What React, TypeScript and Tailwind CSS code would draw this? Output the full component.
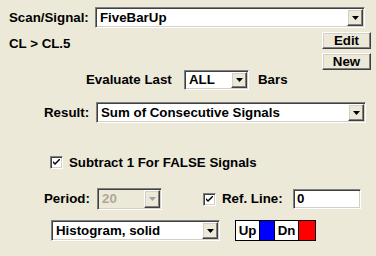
import React from "react";

const sunken =
  "border border-t-[#808080] border-l-[#808080] border-b-white border-r-white shadow-[inset_1px_1px_0_#404040,inset_-1px_-1px_0_#d4d0c8]";
const raised =
  "border border-t-white border-l-white border-b-[#404040] border-r-[#404040] shadow-[inset_-1px_-1px_0_#808080,inset_1px_1px_0_#d4d0c8]";

function Arrow({ disabled }: { disabled?: boolean }) {
  return (
    <svg width="7" height="4" viewBox="0 0 7 4">
      <path d="M0 0H7L3.5 4Z" fill={disabled ? "#a0a0a0" : "#000"} />
    </svg>
  );
}

function Combo({
  value,
  className,
  disabled,
}: {
  value: string;
  className: string;
  disabled?: boolean;
}) {
  return (
    <div
      className={`${sunken} ${className} flex items-stretch p-[1px] ${
        disabled ? "bg-[#ece9d8]" : "bg-white"
      }`}
    >
      <div
        className={`flex-1 flex items-center pl-[3px] ${
          disabled ? "text-[#aca899]" : "text-black"
        }`}
      >
        {value}
      </div>
      <div
        className={`${raised} w-[16px] flex items-center justify-center bg-[#ece9d8]`}
      >
        <Arrow disabled={disabled} />
      </div>
    </div>
  );
}

function Check() {
  return (
    <div
      className={`${sunken} w-[13px] h-[13px] bg-white flex items-center justify-center`}
    >
      <svg width="7" height="7" viewBox="0 0 7 7">
        <path d="M0 2L0 4L2 6L7 1L7 -1L2 4Z" fill="#000" />
      </svg>
    </div>
  );
}

export default function App() {
  return (
    <div className="w-[376px] h-[256px] bg-[#ece9d8] font-['Liberation_Sans',Arial,sans-serif] font-bold text-[13.3px] leading-none text-black overflow-hidden">
      {/* Row 1 */}
      <div className="flex items-center h-[21px] mt-[7px] pl-[9px]">
        <span className="w-[86px]">Scan/Signal:</span>
        <Combo value="FiveBarUp" className="w-[270px] h-[21px]" />
      </div>
      {/* Row 2 */}
      <div className="flex h-[42px]">
        <div className="pl-[9px] pt-[9px] flex-1">CL &gt; CL.5</div>
        <div className="flex flex-col gap-[4px] pt-[4px] mr-[5px]">
          <div
            className={`${raised} w-[49px] h-[17px] flex items-center justify-center bg-[#ece9d8]`}
          >
            Edit
          </div>
          <div
            className={`${raised} w-[49px] h-[17px] flex items-center justify-center bg-[#ece9d8]`}
          >
            New
          </div>
        </div>
      </div>
      {/* Row 3 */}
      <div className="flex items-center h-[20px] pl-[86px]">
        <span className="w-[98px]">Evaluate Last</span>
        <Combo value="ALL" className="w-[65px] h-[20px]" />
        <span className="ml-[9px]">Bars</span>
      </div>
      {/* Row 4 */}
      <div className="flex items-center h-[21px] mt-[12px] pl-[44px]">
        <span className="w-[52px]">Result:</span>
        <Combo value="Sum of Consecutive Signals" className="w-[270px] h-[21px]" />
      </div>
      {/* Row 5 */}
      <div className="flex items-center h-[13px] mt-[33px] pl-[50px]">
        <Check />
        <span className="ml-[6px]">Subtract 1 For FALSE Signals</span>
      </div>
      {/* Row 6 */}
      <div className="flex items-center h-[22px] mt-[19px] pl-[44px]">
        <span className="w-[53px]">Period:</span>
        <Combo value="20" disabled className="w-[65px] h-[22px]" />
        <div className="ml-[41px]">
          <Check />
        </div>
        <span className="ml-[6px] w-[71px]">Ref. Line:</span>
        <div
          className={`${sunken} w-[68px] h-[20px] bg-white flex items-center pl-[3px]`}
        >
          0
        </div>
      </div>
      {/* Row 7 */}
      <div className="flex items-center h-[21px] mt-[10px] pl-[51px]">
        <Combo value="Histogram, solid" className="w-[169px] h-[21px]" />
        <div className="ml-[15px] flex h-[21px] border border-black">
          <div className="w-[24px] bg-white flex items-center justify-center border-r border-black">
            Up
          </div>
          <div className="w-[15px] bg-[#0000ff] border-r border-black" />
          <div className="w-[24px] bg-white flex items-center justify-center border-r border-black">
            Dn
          </div>
          <div className="w-[16px] bg-[#ff0000]" />
        </div>
      </div>
    </div>
  );
}
